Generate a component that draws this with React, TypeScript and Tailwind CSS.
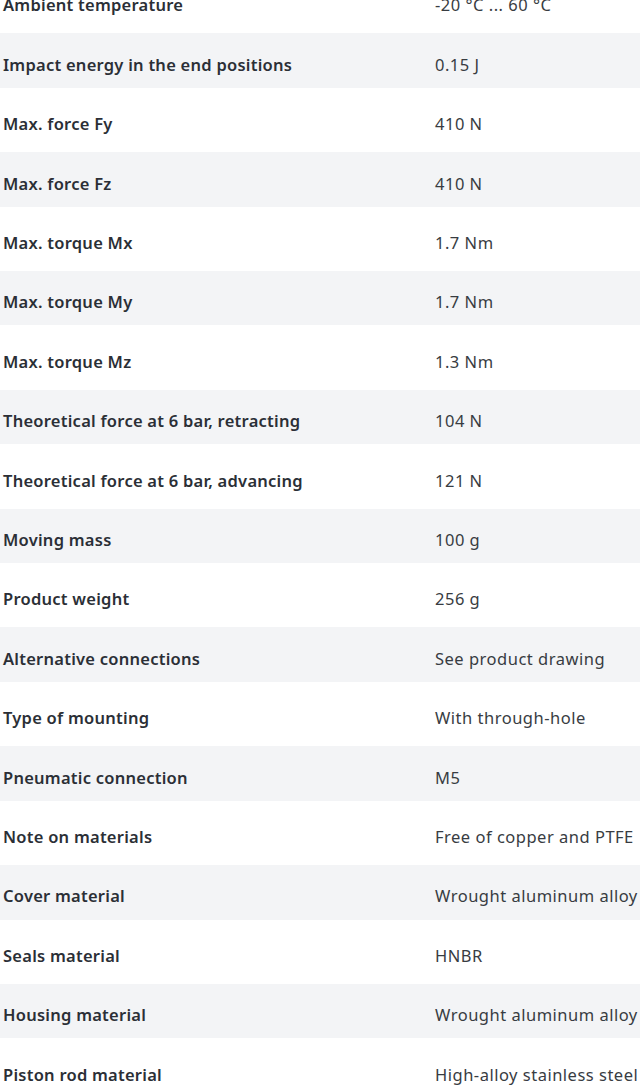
import React from "react";

const rows: [string, string][] = [
  ["Ambient temperature", "-20 °C ... 60 °C"],
  ["Impact energy in the end positions", "0.15 J"],
  ["Max. force Fy", "410 N"],
  ["Max. force Fz", "410 N"],
  ["Max. torque Mx", "1.7 Nm"],
  ["Max. torque My", "1.7 Nm"],
  ["Max. torque Mz", "1.3 Nm"],
  ["Theoretical force at 6 bar, retracting", "104 N"],
  ["Theoretical force at 6 bar, advancing", "121 N"],
  ["Moving mass", "100 g"],
  ["Product weight", "256 g"],
  ["Alternative connections", "See product drawing"],
  ["Type of mounting", "With through-hole"],
  ["Pneumatic connection", "M5"],
  ["Note on materials", "Free of copper and PTFE"],
  ["Cover material", "Wrought aluminum alloy"],
  ["Seals material", "HNBR"],
  ["Housing material", "Wrought aluminum alloy"],
  ["Piston rod material", "High-alloy stainless steel"],
];

export default function App() {
  return (
    <div className="w-[640px] h-[1087px] overflow-hidden bg-white font-['Noto_Sans',sans-serif] text-[#30343b]">
      <div className="-mt-[29px]">
        {rows.map(([k, v], i) => (
          <div
            key={i}
            className={`flex h-[59.42px] items-center border-t-[3px] border-b-2 border-white pt-[9px] whitespace-nowrap ${
              i % 2 === 1 ? "bg-[#f3f4f6]" : "bg-white"
            }`}
          >
            <div className="w-[435px] pl-[3px] text-[16.5px] font-semibold tracking-[0.25px] text-[#2b2f36]">{k}</div>
            <div className="text-[16.5px] tracking-[0.5px] text-[#383c42]">{v}</div>
          </div>
        ))}
      </div>
    </div>
  );
}
